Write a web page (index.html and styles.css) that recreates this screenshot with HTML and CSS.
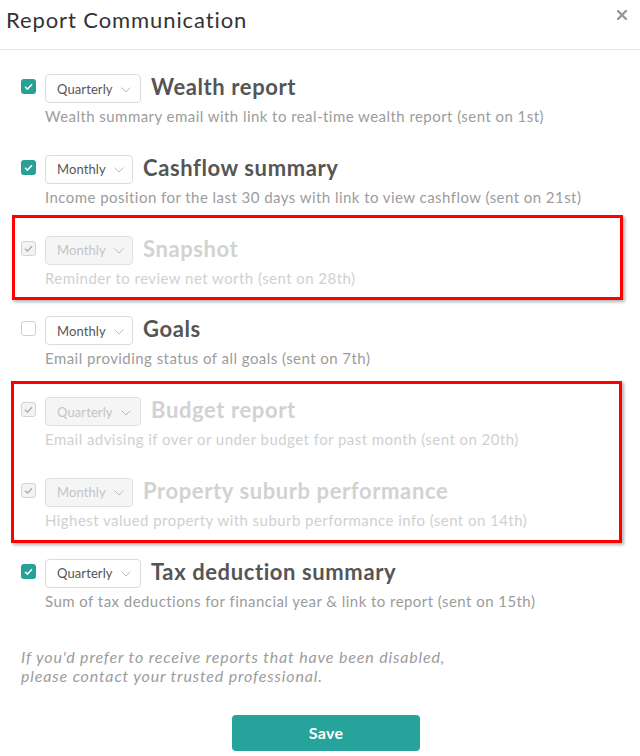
FILE: index.html
```html
<!DOCTYPE html>
<html>
<head>
<meta charset="utf-8">
<link rel="stylesheet" href="styles.css">
</head>
<body>
<div class="modal">
  <header class="modal-header">
    <h1 class="modal-title">Report Communication</h1>
    <button class="close" aria-label="Close">
      <svg width="10" height="10" viewBox="0 0 10 10"><path d="M1 1L9 9M9 1L1 9" stroke="#9a9a9a" stroke-width="2.4" stroke-linecap="square"/></svg>
    </button>
  </header>

  <div class="list">
    <div class="row">
      <div class="line">
        <span class="cb on"><svg viewBox="0 0 15 15"><path d="M4 7.8l2.4 2.3L11 5.2" fill="none" stroke="#fff" stroke-width="1.5"/></svg></span>
        <span class="select q">Quarterly<svg class="chev" viewBox="0 0 10 6"><path d="M0.5 0.5L5 5L9.5 0.5" fill="none" stroke="#bbb"/></svg></span>
        <span class="name">Wealth report</span>
      </div>
      <p class="desc">Wealth summary email with link to real-time wealth report (sent on 1st)</p>
    </div>

    <div class="row">
      <div class="line">
        <span class="cb on"><svg viewBox="0 0 15 15"><path d="M4 7.8l2.4 2.3L11 5.2" fill="none" stroke="#fff" stroke-width="1.5"/></svg></span>
        <span class="select m">Monthly<svg class="chev" viewBox="0 0 10 6"><path d="M0.5 0.5L5 5L9.5 0.5" fill="none" stroke="#bbb"/></svg></span>
        <span class="name">Cashflow summary</span>
      </div>
      <p class="desc">Income position for the last 30 days with link to view cashflow (sent on 21st)</p>
    </div>

    <div class="flag flag-one">
      <div class="row disabled">
        <div class="line">
          <span class="cb dis"><svg viewBox="0 0 15 15"><path d="M4 7.8l2.4 2.3L11 5.2" fill="none" stroke="#a8a8a8" stroke-width="1.3"/></svg></span>
          <span class="select m">Monthly<svg class="chev" viewBox="0 0 10 6"><path d="M0.5 0.5L5 5L9.5 0.5" fill="none" stroke="#bbb"/></svg></span>
          <span class="name">Snapshot</span>
        </div>
        <p class="desc">Reminder to review net worth (sent on 28th)</p>
      </div>
    </div>

    <div class="row">
      <div class="line">
        <span class="cb off"></span>
        <span class="select m">Monthly<svg class="chev" viewBox="0 0 10 6"><path d="M0.5 0.5L5 5L9.5 0.5" fill="none" stroke="#bbb"/></svg></span>
        <span class="name">Goals</span>
      </div>
      <p class="desc">Email providing status of all goals (sent on 7th)</p>
    </div>

    <div class="flag flag-two">
      <div class="row disabled">
        <div class="line">
          <span class="cb dis"><svg viewBox="0 0 15 15"><path d="M4 7.8l2.4 2.3L11 5.2" fill="none" stroke="#a8a8a8" stroke-width="1.3"/></svg></span>
          <span class="select q">Quarterly<svg class="chev" viewBox="0 0 10 6"><path d="M0.5 0.5L5 5L9.5 0.5" fill="none" stroke="#bbb"/></svg></span>
          <span class="name">Budget report</span>
        </div>
        <p class="desc">Email advising if over or under budget for past month (sent on 20th)</p>
      </div>
      <div class="row disabled">
        <div class="line">
          <span class="cb dis"><svg viewBox="0 0 15 15"><path d="M4 7.8l2.4 2.3L11 5.2" fill="none" stroke="#a8a8a8" stroke-width="1.3"/></svg></span>
          <span class="select m">Monthly<svg class="chev" viewBox="0 0 10 6"><path d="M0.5 0.5L5 5L9.5 0.5" fill="none" stroke="#bbb"/></svg></span>
          <span class="name">Property suburb performance</span>
        </div>
        <p class="desc">Highest valued property with suburb performance info (sent on 14th)</p>
      </div>
    </div>

    <div class="row">
      <div class="line">
        <span class="cb on"><svg viewBox="0 0 15 15"><path d="M4 7.8l2.4 2.3L11 5.2" fill="none" stroke="#fff" stroke-width="1.5"/></svg></span>
        <span class="select q">Quarterly<svg class="chev" viewBox="0 0 10 6"><path d="M0.5 0.5L5 5L9.5 0.5" fill="none" stroke="#bbb"/></svg></span>
        <span class="name">Tax deduction summary</span>
      </div>
      <p class="desc">Sum of tax deductions for financial year &amp; link to report (sent on 15th)</p>
    </div>
  </div>

  <div class="footer">
    <p class="note">If you'd prefer to receive reports that have been disabled,<br>please contact your trusted professional.</p>
    <div class="actions"><button class="save">Save</button></div>
  </div>
</div>
</body>
</html>
```
FILE: styles.css
```css
* { box-sizing: border-box; }
html, body { margin: 0; padding: 0; background: #fff; }
body { font-family: Lato, "Open Sans", sans-serif; color: #555; }

.modal { width: 640px; }

.modal-header {
  height: 50px;
  border-bottom: 1px solid #e3e3e3;
  display: flex;
  align-items: flex-start;
  justify-content: space-between;
  padding: 0 13px 0 6px;
}
.modal-title {
  margin: 0;
  padding-top: 6px;
  font-size: 22px;
  line-height: 28px;
  font-weight: 400;
  color: #333;
  letter-spacing: 0.9px;
}
.close {
  border: 0;
  background: none;
  padding: 0;
  margin-top: 10px;
  width: 10px;
  height: 10px;
  display: flex;
}

.list {
  display: flex;
  flex-direction: column;
  gap: 28.8px;
  padding: 24px 19px 0 21px;
}

.row { display: flex; flex-direction: column; }
.line { display: flex; align-items: flex-start; height: 29px; }

.cb {
  width: 15px; height: 15px;
  border-radius: 3px;
  margin-top: 5px;
  margin-right: 9px;
  flex: none;
  display: flex;
}
.cb svg { width: 15px; height: 15px; }
.cb.on { background: #27a096; }
.cb.off { border: 1px solid #d0d0d0; background: #fff; }
.cb.dis { border: 1px solid #d4d4d4; background: #f3f3f3; }
.cb.dis svg { margin: -1px; }

.select {
  flex: none;
  height: 29px;
  border: 1px solid #dcdcdc;
  border-radius: 4px;
  display: flex;
  align-items: center;
  padding-left: 11px;
  font-size: 13px;
  color: #555;
  background: #fff;
  letter-spacing: 0.1px;
}
.select.q { width: 96px; }
.select.m { width: 88px; }
.chev { width: 10px; height: 6px; margin-left: 8px; margin-top: 2px; }

.name {
  margin-left: 10px;
  font-size: 22px;
  line-height: 26px;
  margin-top: 0;
  font-weight: 700;
  color: #555;
  letter-spacing: 0.6px;
}

.desc {
  margin: 3px 0 0 24px;
  font-size: 15px;
  line-height: 20px;
  color: #9c9c9c;
  letter-spacing: 0.45px;
}

.disabled .select { background: #f5f5f5; color: #c4c4c4; border-color: #e0e0e0; }
.disabled .name { color: #d2d2d2; }
.disabled .desc { color: #d0d0d0; }

.flag {
  border: 3px solid #ff0000;
  box-shadow: 2px 2px 3px rgba(0, 0, 0, 0.3);
  display: flex;
  flex-direction: column;
  gap: 28.8px;
}
.flag-one {
  margin: -21px -2px -12px -9px;
  padding: 18px 0 9px 6px;
}
.flag-two {
  margin: -16px -1px -13px -10px;
  padding: 13px 0 10px 7px;
}

.footer { padding: 36px 0 0 21px; }
.note {
  margin: 0;
  font-size: 16px;
  line-height: 19.5px;
  font-style: italic;
  color: #9c9c9c;
  letter-spacing: 0.85px;
}
.actions { display: flex; justify-content: center; padding: 29px 0 0 12px; margin-left: -21px; }
.save {
  width: 188px;
  height: 36px;
  border: 0;
  border-radius: 4px;
  background: #26a39a;
  color: #fff;
  font-family: Lato, sans-serif;
  font-size: 16px;
  font-weight: 700;
  letter-spacing: 0.3px;
}
```
